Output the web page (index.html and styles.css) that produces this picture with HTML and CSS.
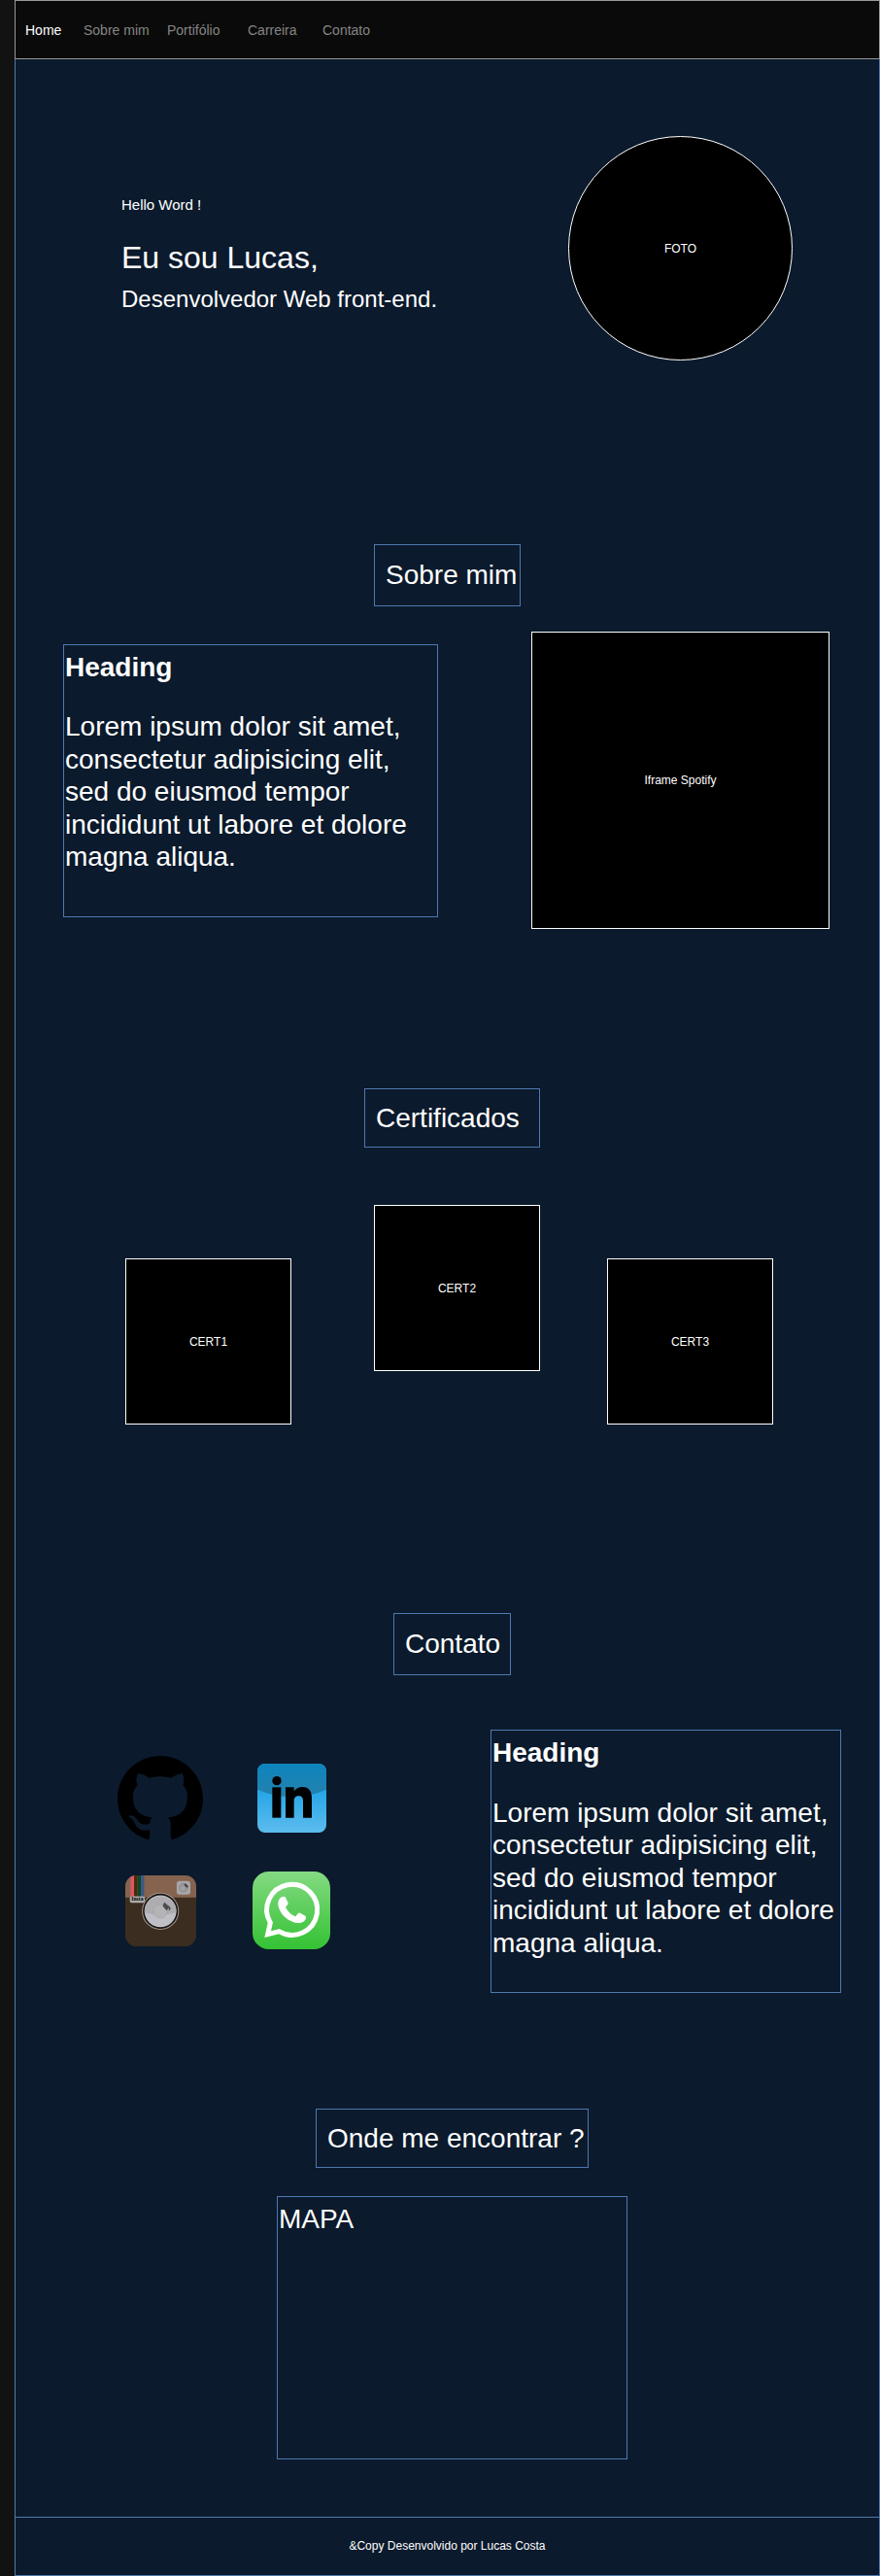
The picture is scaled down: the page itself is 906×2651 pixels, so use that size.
FILE: index.html
```html
<!DOCTYPE html>
<html lang="pt-BR">
<head>
<meta charset="utf-8">
<title>Lucas Costa</title>
<link rel="stylesheet" href="styles.css">
</head>
<body>
<header class="topbar">
  <nav class="nav">
    <a class="nav-link active" href="#home">Home</a>
    <a class="nav-link" href="#sobre">Sobre mim</a>
    <a class="nav-link" href="#certificados">Portifólio</a>
    <a class="nav-link" href="#certificados">Carreira</a>
    <a class="nav-link" href="#contato">Contato</a>
  </nav>
</header>
<main class="page">
  <section class="hero" id="home">
    <div class="intro">
      <p class="hello">Hello Word !</p>
      <h1 class="name">Eu sou Lucas,</h1>
      <p class="role">Desenvolvedor Web front-end.</p>
    </div>
    <div class="photo">FOTO</div>
  </section>

  <section class="about" id="sobre">
    <h2 class="title title-tall title-about">Sobre mim</h2>
    <div class="about-row">
      <article class="card card-about">
        <h3 class="card-heading">Heading</h3>
        <p class="card-text">Lorem ipsum dolor sit amet, consectetur adipisicing elit, sed do eiusmod tempor incididunt ut labore et dolore magna aliqua.</p>
      </article>
      <div class="box spotify">Iframe Spotify</div>
    </div>
  </section>

  <section class="certs" id="certificados">
    <h2 class="title title-certs">Certificados</h2>
    <div class="certs-row">
      <div class="box cert">CERT1</div>
      <div class="box cert cert-raised">CERT2</div>
      <div class="box cert">CERT3</div>
    </div>
  </section>

  <section class="contact" id="contato">
    <h2 class="title title-tall title-contact">Contato</h2>
    <div class="contact-row">
      <div class="social">
        <a href="#github" aria-label="GitHub">
          <svg class="icon icon-github" viewBox="0 0 24 24"><path d="M12 .297c-6.63 0-12 5.373-12 12 0 5.303 3.438 9.8 8.205 11.385.6.113.82-.258.82-.577 0-.285-.01-1.04-.015-2.04-3.338.724-4.042-1.61-4.042-1.61C4.422 18.07 3.633 17.7 3.633 17.7c-1.087-.744.084-.729.084-.729 1.205.084 1.838 1.236 1.838 1.236 1.07 1.835 2.809 1.305 3.495.998.108-.776.417-1.305.76-1.605-2.665-.3-5.466-1.332-5.466-5.93 0-1.31.465-2.38 1.235-3.22-.135-.303-.54-1.523.105-3.176 0 0 1.005-.322 3.3 1.23.96-.267 1.98-.399 3-.405 1.02.006 2.04.138 3 .405 2.28-1.552 3.285-1.23 3.285-1.23.645 1.653.24 2.873.12 3.176.765.84 1.23 1.91 1.23 3.22 0 4.61-2.805 5.625-5.475 5.92.42.36.81 1.096.81 2.22 0 1.606-.015 2.896-.015 3.286 0 .315.21.69.825.57C20.565 22.092 24 17.592 24 12.297c0-6.627-5.373-12-12-12"/></svg>
        </a>
        <a href="#linkedin" aria-label="LinkedIn">
          <svg class="icon icon-linkedin" viewBox="0 0 213 213">
            <defs>
              <linearGradient id="li-low" x1="0" y1="0" x2="0" y2="1"><stop offset=".4" stop-color="#26a6e6"/><stop offset="1" stop-color="#5dbcee"/></linearGradient>
              <linearGradient id="li-top" x1="0" y1="0" x2="0" y2="1"><stop offset="0" stop-color="#0d84bd"/><stop offset="1" stop-color="#2581ad"/></linearGradient>
            </defs>
            <rect width="213" height="213" rx="24" fill="url(#li-low)"/>
            <path d="M0 80V24A24 24 0 0 1 24 0H189A24 24 0 0 1 213 24V80Q106 125 0 80Z" fill="url(#li-top)"/>
            <circle cx="60" cy="53" r="14"/>
            <rect x="46" y="73" width="27" height="94"/>
            <path d="M87 73h26v12c6-9 16-13 27-13 19 0 28 14 28 34v61h-27v-52c0-10-4-16-13-16s-15 6-15 16v52H87z"/>
          </svg>
        </a>
        <a href="#instagram" aria-label="Instagram">
          <svg class="icon icon-instagram" viewBox="0 0 218 218">
            <defs><clipPath id="ig"><rect width="218" height="218" rx="34"/></clipPath></defs>
            <g clip-path="url(#ig)">
              <rect width="218" height="218" fill="#3b2d20"/>
              <rect width="218" height="68" fill="#85634f"/>
              <rect x="16" width="11" height="66" fill="#da5768"/>
              <rect x="27" width="10" height="66" fill="#4c2803"/>
              <rect x="37" width="11" height="66" fill="#11452a"/>
              <rect x="48" width="10" height="66" fill="#3a5983"/>
            </g>
            <rect x="14" y="64" width="46" height="20" rx="5" fill="#aaa9a8"/>
            <text class="insta-label" x="37" y="79" text-anchor="middle">Insta</text>
            <circle cx="108" cy="110" r="57" fill="#9d938a"/>
            <circle cx="108" cy="110" r="54" fill="#17130f"/>
            <circle cx="108" cy="110" r="49" fill="#bfc0c6"/>
            <path d="M59 114a49 49 0 1 1 98 0q-49 14-98 0z" fill="#adadb1"/>
            <circle cx="108" cy="110" r="21" fill="#b4b4b7" stroke="#a09d9d" stroke-width="2"/>
            <path d="M120 82l16 15-9 11-12-14z" fill="#4c4b4e"/>
            <path d="M133 91l7 11-6 8" fill="#4c4b4e"/>
            <rect x="158" y="17" width="42" height="42" rx="9" fill="#a7a7a9"/>
            <circle cx="179" cy="38" r="15" fill="#949496"/>
            <circle cx="177" cy="40" r="7" fill="#a3a3a6"/>
            <path d="M184 24l10 10-5 4-8-9z" fill="#3c3b3d"/>
          </svg>
        </a>
        <a href="#whatsapp" aria-label="WhatsApp">
          <svg class="icon icon-whatsapp" viewBox="0 0 240 240">
            <defs><linearGradient id="wa" x1="0" y1="0" x2="0" y2="1"><stop offset="0" stop-color="#84da82"/><stop offset="1" stop-color="#34c234"/></linearGradient></defs>
            <rect width="240" height="240" rx="50" fill="url(#wa)"/>
            <path d="M55 158A78 78 0 1 1 82 185L47 194Z" fill="none" stroke="#fff" stroke-width="15"/>
            <path d="M92 78c-10 4-14 14-13 26 6 28 30 52 62 55 12 0 22-6 24-16 0-3 0-5-2-6l-16-9c-3-1-5 0-7 2l-7 9c-14-5-25-16-31-29l7-9c1-2 1-4 0-6l-7-15c-2-3-6-3-10-2z" fill="#fff"/>
          </svg>
        </a>
      </div>
      <article class="card card-contact">
        <h3 class="card-heading">Heading</h3>
        <p class="card-text">Lorem ipsum dolor sit amet, consectetur adipisicing elit, sed do eiusmod tempor incididunt ut labore et dolore magna aliqua.</p>
      </article>
    </div>
  </section>

  <section class="place" id="mapa">
    <h2 class="title title-place">Onde me encontrar ?</h2>
    <div class="card map">MAPA</div>
  </section>
</main>
<footer class="footer">&amp;Copy Desenvolvido por Lucas Costa</footer>
</body>
</html>
```
FILE: styles.css
```css
:root {
  --navy: #0b1a2c;
  --blue: #5078b0;
}

* {
  box-sizing: border-box;
}

body {
  margin: 0;
  padding-left: 15px;
  background: #121212;
  color: #fff;
  font-family: "Liberation Sans", Arial, sans-serif;
}

h1, h2, h3, p {
  margin: 0;
  font-weight: normal;
}

.topbar {
  padding: 0 10px;
  border: 1px solid #999;
  background: #0a0a0a;
}

.nav {
  display: grid;
  grid-template-columns: 60px 86px 83px 77px auto;
  justify-content: start;
  align-items: center;
  height: 59px;
}

.nav-link {
  color: #858585;
  font-size: 14px;
  line-height: 18px;
  text-decoration: none;
}

.nav-link.active {
  color: #fff;
}

.page {
  border: solid var(--blue);
  border-width: 0 1px;
  background: var(--navy);
}

.hero {
  display: flex;
  justify-content: space-between;
  align-items: flex-start;
  padding: 79px 89px 189px 109px;
}

.intro {
  padding-top: 62px;
}

.hello {
  margin-bottom: 26px;
  font-size: 15px;
  line-height: 18px;
}

.name {
  margin-bottom: 10px;
  font-size: 32px;
  line-height: 38px;
}

.role {
  font-size: 24px;
  line-height: 28px;
}

.photo,
.box {
  display: flex;
  justify-content: center;
  align-items: center;
  border: 1px solid #fff;
  background: #000;
  font-size: 12px;
}

.photo {
  width: 231px;
  height: 231px;
  border-radius: 50%;
}

.title {
  display: flex;
  align-items: center;
  min-height: 61px;
  margin: 0 auto;
  padding-left: 11px;
  border: 1px solid var(--blue);
  font-size: 28px;
  line-height: 1.2;
}

.title-tall {
  min-height: 64px;
}

.title-about { width: 151px; }
.title-certs { width: 181px; }
.title-contact { width: 121px; }
.title-place { width: 281px; }

.certs,
.contact,
.place {
  padding-left: 10px;
}

.card {
  padding: 6px 0 0 1px;
  border: 1px solid var(--blue);
  font-size: 28px;
  line-height: 1.2;
}

.card-heading {
  margin-bottom: 28px;
  font-size: 28px;
  font-weight: bold;
}

.about {
  padding-bottom: 164px;
}

.about-row {
  display: flex;
  justify-content: space-between;
  align-items: center;
  margin-top: 26px;
  padding: 0 51px 0 49px;
}

.card-about {
  width: 386px;
  min-height: 281px;
}

.spotify {
  width: 307px;
  height: 306px;
}

.certs {
  padding-bottom: 194px;
}

.certs-row {
  display: grid;
  grid-template-columns: 256fr 240fr 171px;
  margin-top: 59px;
  padding: 0 109px 0 103px;
}

.cert {
  width: 171px;
  height: 171px;
  margin-top: 55px;
}

.cert-raised {
  margin-top: 0;
}

.contact {
  padding-bottom: 119px;
}

.contact-row {
  display: flex;
  justify-content: space-between;
  align-items: flex-start;
  margin-top: 56px;
  padding: 0 39px 0 95px;
}

.social {
  display: grid;
  grid-template-columns: 88px 80px;
  grid-template-rows: 88px 80px;
  gap: 32px 51px;
  place-items: center;
  padding-top: 26px;
}

.icon {
  display: block;
}

.icon-github { width: 88px; height: 88px; }
.icon-linkedin { width: 71px; height: 71px; }
.icon-instagram { width: 73px; height: 73px; }
.icon-whatsapp { width: 80px; height: 80px; }

.insta-label {
  font: bold 17px "Liberation Serif", serif;
}

.card-contact {
  width: 361px;
  min-height: 271px;
}

.place {
  padding-bottom: 59px;
}

.map {
  width: 361px;
  min-height: 271px;
  margin: 29px auto 0;
}

.footer {
  padding: 20px 0;
  border: 1px solid var(--blue);
  background: var(--navy);
  font-size: 12px;
  line-height: 19px;
  text-align: center;
}
```
